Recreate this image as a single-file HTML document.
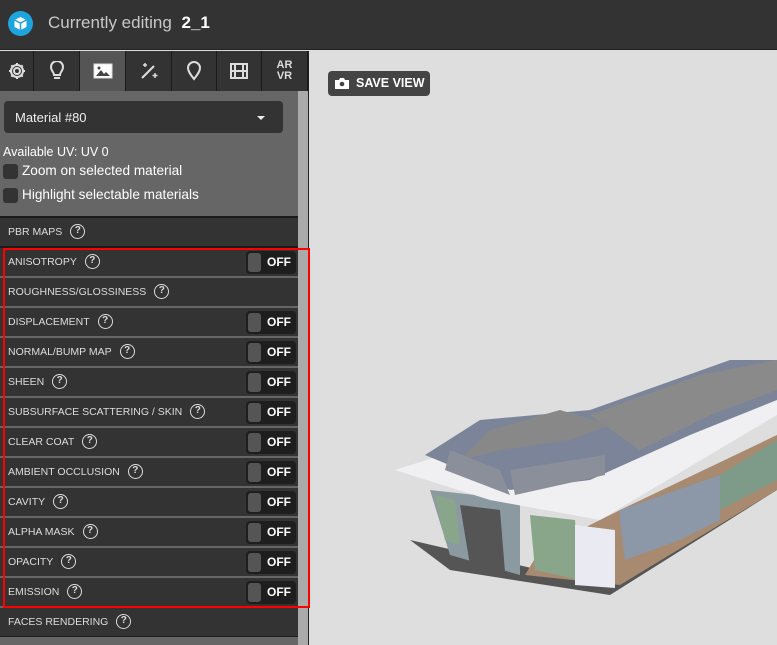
<!DOCTYPE html>
<html><head><style>
*{margin:0;padding:0;box-sizing:border-box}
body{width:777px;height:645px;overflow:hidden;background:#dedede;font-family:"Liberation Sans",sans-serif;position:relative}
#hdr{position:absolute;left:0;top:0;width:777px;height:50px;background:#333;border-bottom:1px solid #222}
#hdr .logo{position:absolute;left:8px;top:11px;width:25px;height:25px;border-radius:50%;background:#1fa5dd}
#hdr .t{position:absolute;left:48px;top:13px;font-size:17px;color:#c8c8c8}
#hdr .t b{color:#fff;margin-left:5px}
#tabs{position:absolute;left:0;top:51px;width:308px;height:40px;background:#333}
.tab{position:absolute;top:0;height:40px;border-right:1px solid #1a1a1a;display:flex;align-items:center;justify-content:center}
#side{position:absolute;left:0;top:91px;width:298px;height:554px;background:#666}
#scroll{position:absolute;left:298px;top:91px;width:10px;height:554px;background:#aaa}
#vline{position:absolute;left:308px;top:51px;width:1px;height:594px;background:#222}
.sel{position:absolute;left:4px;top:101px;width:279px;height:32px;background:#333;border-radius:4px;color:#eee;font-size:13px;padding:9px 11px}
.sel:after{content:"";position:absolute;right:18px;top:15px;border-left:4px solid transparent;border-right:4px solid transparent;border-top:4px solid #eee}
.lbl{position:absolute;left:3px;font-size:13.6px;color:#fff}
.cb{position:absolute;left:3px;width:15px;height:15px;background:#333;border-radius:3px}
.row{position:absolute;left:0;width:298px;height:28px;background:#333;color:#ddd;font-size:10.5px;line-height:28px;padding-left:8px;white-space:nowrap}
.q{display:inline-block;width:15px;height:15px;border:1.5px solid #ddd;border-radius:50%;font-size:10px;font-weight:bold;text-align:center;line-height:12px;margin-left:8px;vertical-align:middle;position:relative;top:-1px}
.tg{position:absolute;left:246px;top:3px;width:50px;height:23px;background:#1e1e1e;border-radius:4px;color:#fff;font-size:12px;font-weight:bold;line-height:23px;padding-left:21px}
.tg:before{content:"";position:absolute;left:2px;top:2px;width:13px;height:19px;border-radius:3px;background:#555}
.sep{position:absolute;left:0;width:298px;background:#1c1c1c}
#red{position:absolute;left:3px;top:248px;width:307px;height:360px;border:2px solid #f00}
#save{position:absolute;left:328px;top:71px;width:102px;height:25px;background:#444;border-radius:4px;color:#fff;font-weight:bold;font-size:12.5px;line-height:25px;padding-left:28px}
</style></head><body>
<div id="hdr"><div class="logo"><svg width="25" height="25" viewBox="0 0 25 25"><path d="M12.5 6l6 3v7l-6 3-6-3V9z" fill="#fff"/><path d="M6.5 9l6 3 6-3M12.5 12v7" stroke="#1fa5dd" stroke-width="1.5" fill="none"/></svg></div><div class="t">Currently editing <b>2_1</b></div></div>
<div id="tabs">
<div class="tab" style="left:0;width:34px"><svg width="20" height="20" viewBox="0 0 20 20" fill="none" stroke="#ddd" stroke-width="2"><circle cx="10" cy="10" r="3"/><path d="M10 2v3M10 15v3M2 10h3M15 10h3M4.3 4.3l2.1 2.1M13.6 13.6l2.1 2.1M4.3 15.7l2.1-2.1M13.6 6.4l2.1-2.1"/><circle cx="10" cy="10" r="6"/></svg></div>
<div class="tab" style="left:34px;width:46px"><svg width="16" height="20" viewBox="0 0 16 20" fill="none" stroke="#ddd" stroke-width="2"><path d="M5 14c0-3-3-4-3-8a6 6 0 0112 0c0 4-3 5-3 8z"/><path d="M5 17h6"/></svg></div>
<div class="tab" style="left:80px;width:46px;background:#555"><svg width="20" height="16" viewBox="0 0 20 16"><rect x="1" y="1" width="18" height="14" fill="#fff" stroke="#ddd"/><path d="M3 13l5-6 3 4 2-2 4 4z" fill="#444"/><circle cx="6" cy="5" r="1.5" fill="#444"/></svg></div>
<div class="tab" style="left:126px;width:46px"><svg width="20" height="20" viewBox="0 0 20 20" fill="none" stroke="#ddd" stroke-width="2"><path d="M3 17L15 5"/><path d="M6 2v4M4 4h4M16 12v5M13.5 14.5h5" stroke-width="1.5"/></svg></div>
<div class="tab" style="left:172px;width:45px"><svg width="16" height="20" viewBox="0 0 16 20" fill="none" stroke="#ddd" stroke-width="2"><path d="M8 18c-4-5-6-8-6-11a6 6 0 0112 0c0 3-2 6-6 11z"/></svg></div>
<div class="tab" style="left:217px;width:45px"><svg width="20" height="18" viewBox="0 0 20 18" fill="none" stroke="#ddd" stroke-width="2"><rect x="2" y="2" width="16" height="14"/><path d="M6 2v14M14 2v14M2 9h16"/></svg></div>
<div class="tab" style="left:262px;width:46px;color:#ddd;font-size:11px;font-weight:bold;line-height:11px;text-align:center">AR<br>VR</div>
</div>
<div id="vline"></div>
<div id="side"></div>
<div id="scroll"></div>
<div class="sel">Material #80</div>
<div class="lbl" style="top:145px;font-size:12.5px">Available UV: UV 0</div>
<div class="cb" style="top:164px"></div><div class="lbl" style="left:22px;top:163px">Zoom on selected material</div>
<div class="cb" style="top:188px"></div><div class="lbl" style="left:22px;top:187px">Highlight selectable materials</div>
<div class="sep" style="top:216px;height:2px"></div>
<div class="row" style="top:218px">PBR MAPS<span class="q">?</span></div>
<div class="sep" style="top:246px;height:2px"></div>
<div class="row" style="top:248px">ANISOTROPY<span class="q">?</span><div class="tg">OFF</div></div>
<div class="row" style="top:278px">ROUGHNESS/GLOSSINESS<span class="q">?</span></div>
<div class="row" style="top:308px">DISPLACEMENT<span class="q">?</span><div class="tg">OFF</div></div>
<div class="row" style="top:338px">NORMAL/BUMP MAP<span class="q">?</span><div class="tg">OFF</div></div>
<div class="row" style="top:368px">SHEEN<span class="q">?</span><div class="tg">OFF</div></div>
<div class="row" style="top:398px">SUBSURFACE SCATTERING / SKIN<span class="q">?</span><div class="tg">OFF</div></div>
<div class="row" style="top:428px">CLEAR COAT<span class="q">?</span><div class="tg">OFF</div></div>
<div class="row" style="top:458px">AMBIENT OCCLUSION<span class="q">?</span><div class="tg">OFF</div></div>
<div class="row" style="top:488px">CAVITY<span class="q">?</span><div class="tg">OFF</div></div>
<div class="row" style="top:518px">ALPHA MASK<span class="q">?</span><div class="tg">OFF</div></div>
<div class="row" style="top:548px">OPACITY<span class="q">?</span><div class="tg">OFF</div></div>
<div class="row" style="top:578px">EMISSION<span class="q">?</span><div class="tg">OFF</div></div>
<div class="row" style="top:608px;height:28px">FACES RENDERING<span class="q">?</span></div>
<div class="sep" style="top:636px;height:1px"></div>
<div id="red"></div>
<div id="save"><svg style="position:absolute;left:7px;top:7px" width="14" height="11" viewBox="0 0 14 11"><path d="M0 2h4l1-2h4l1 2h4v9H0z" fill="#fff"/><circle cx="7" cy="6" r="2.3" fill="#444"/></svg>SAVE VIEW</div>
<svg style="position:absolute;left:390px;top:340px" width="387" height="260" viewBox="0 0 387 260">
<polygon points="20,200 150,230 320,160 387,130 387,150 220,255 60,230" fill="#555"/>
<polygon points="150,210 230,170 387,95 387,150 230,245 135,235" fill="#a88a70"/>
<polygon points="40,150 60,215 130,235 130,160" fill="#8a9aa0"/>
<polygon points="45,155 55,200 70,205 65,160" fill="#8aa68a"/>
<polygon points="70,165 80,225 115,232 110,170" fill="#555"/>
<polygon points="140,175 145,230 190,240 185,180" fill="#8aa68a"/>
<polygon points="185,185 185,245 225,248 225,190" fill="#eaeaf2"/>
<polygon points="230,180 235,220 290,200 330,180 330,135 230,170" fill="#8c97a8"/>
<polygon points="330,135 330,170 387,140 387,100" fill="#7e9a88"/>
<polygon points="5,130 100,160 210,180 387,75 387,60 260,110 100,100" fill="#f0f0f2"/>
<polygon points="35,115 120,150 200,140 300,95 387,60 387,20 340,20 200,70 90,80" fill="#7b8498"/>
<polygon points="200,75 310,35 387,20 387,50 320,75 250,110" fill="#8a8a8a"/>
<polygon points="70,120 110,110 180,100 220,85 170,70 100,90" fill="#888"/>
<polygon points="60,110 110,130 120,155 55,130" fill="#8a8f99"/>
<polygon points="120,130 215,115 215,135 125,155" fill="#8a8f99"/>
</svg>
</body></html>
